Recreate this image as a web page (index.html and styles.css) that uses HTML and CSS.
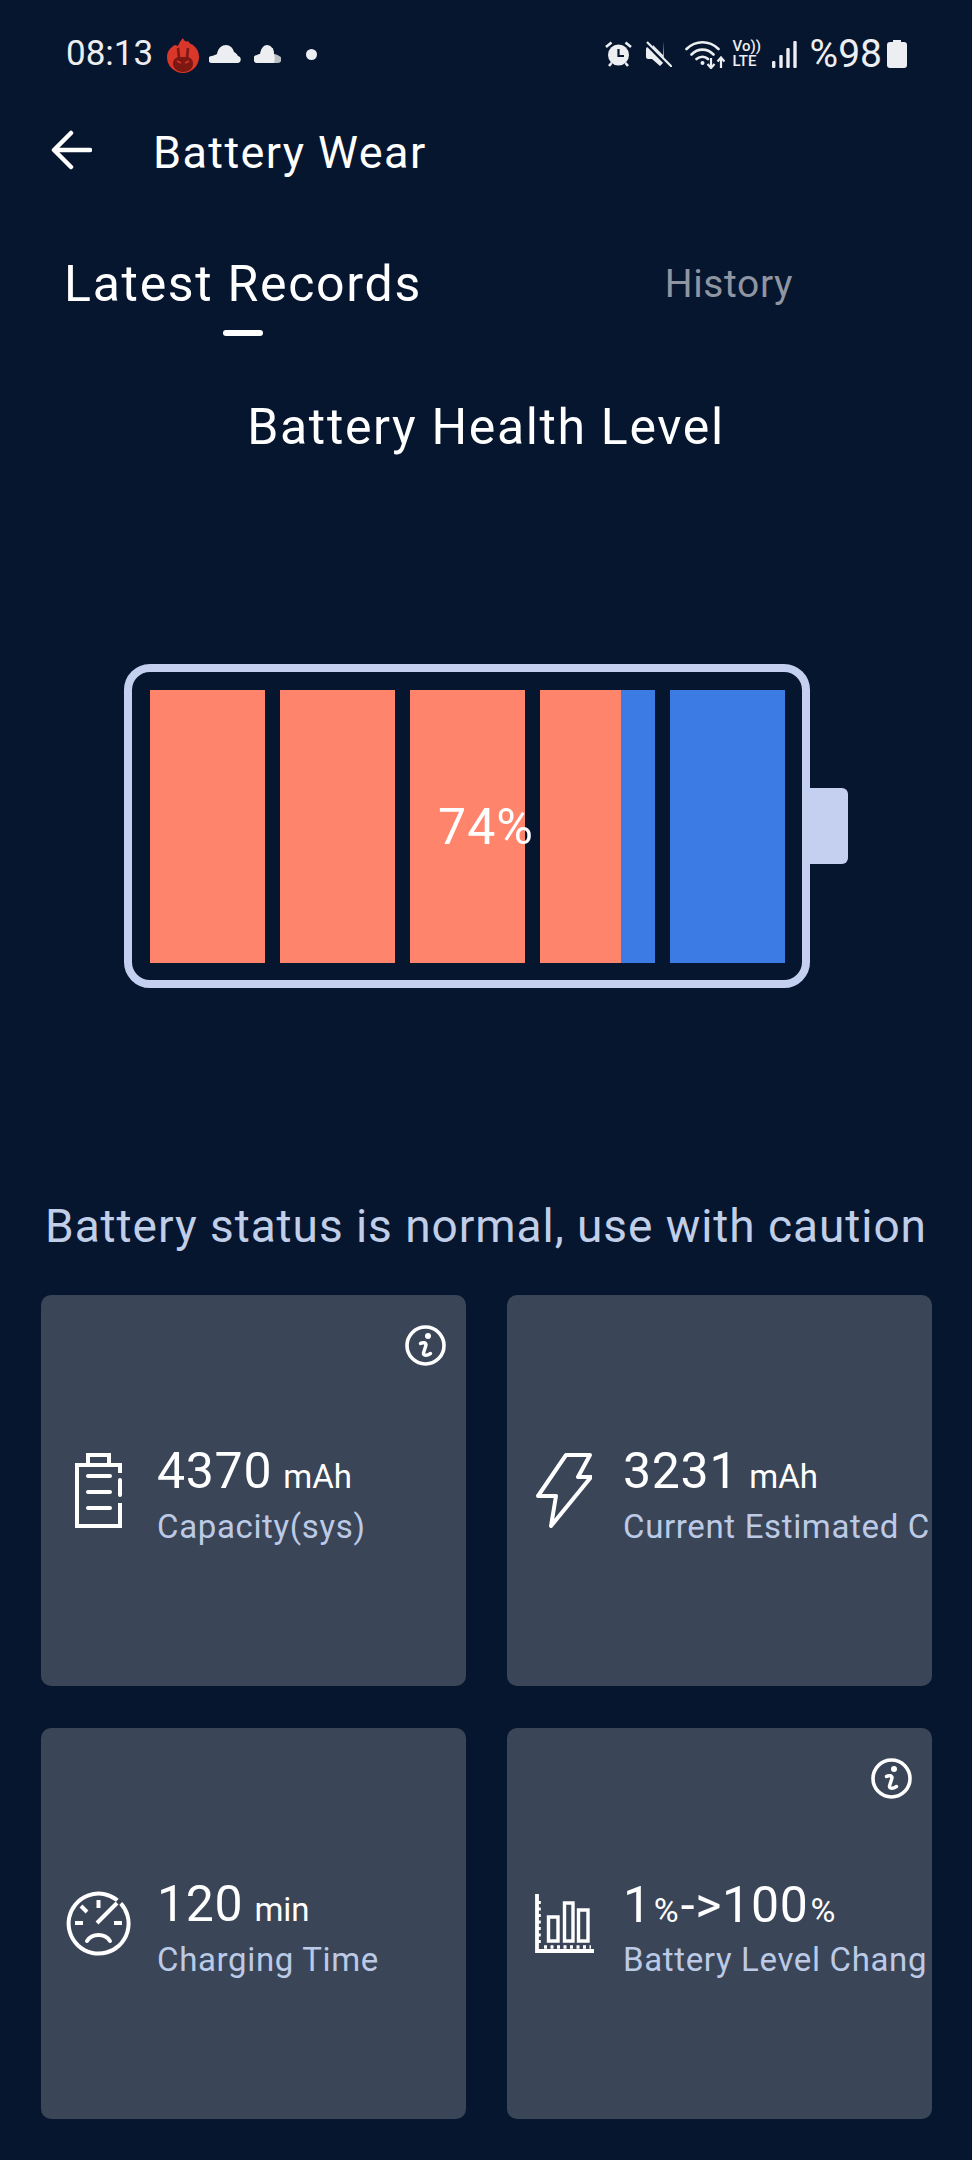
FILE: index.html
```html
<!DOCTYPE html>
<html lang="en">

<head>
    <meta charset="UTF-8">
    <meta name="viewport" content="width=device-width, initial-scale=1.0">
    <title>Battery Wear</title>
    <link rel="stylesheet" href="styles.css">
</head>

<body>
    <div class="status-bar">
        <span class="clock">08:13</span>
        <svg class="ic-flame" width="32" height="35" viewBox="0 0 32 35">
            <path fill="#d8372a" d="M16 0C17 3 19 4 21 3C22 5 24 6 26 7C30 10 32 14 32 19A16 16 0 0 1 0 19C0 13 4 9 8 7C9 7 10 8 11 8C12 5 14 2 16 0Z" />
            <path fill="#7c1712" d="M16 34C10 34 6 30 6 26C6 22 8 20 11 19H21C24 20 26 22 26 26C26 30 22 34 16 34Z" />
            <path stroke="#7c1712" stroke-width="2.6" fill="none" d="M11 10L12 20M21 10L20 20" />
            <path stroke="#d8372a" stroke-width="1.6" fill="none" d="M10 23L14 25M22 23L18 25" />
        </svg>
        <svg class="ic-cloud-a" width="32" height="18" viewBox="0 0 32 18">
            <path fill="#eceef1" d="M3 18A3 3 0 0 1 3 11C5 10 7 10 8 9C9 3 13 0 17 0C21 0 24 3 25 7C27 8 28 9 29 11A3.6 3.6 0 0 1 29 18Z" />
        </svg>
        <svg class="ic-cloud-b" width="27" height="18" viewBox="0 0 27 18">
            <path fill="#b9bdc4" d="M14 3H19L20 9C22 9 24 10 25 11A3.6 3.6 0 0 1 24 18H14Z" />
            <path fill="#eceef1" d="M4 18A4 4 0 0 1 3 10C4 9 5 9 6 9C7 3 10 0 13 0C17 0 20 4 20 9C21 12 21 15 20 18Z" />
        </svg>
        <span class="status-dot"></span>

        <div class="status-right">
            <svg class="ic-alarm" width="27" height="26" viewBox="0 0 27 26">
                <circle cx="13.5" cy="14" r="10.5" fill="#eceef1" />
                <path stroke="#eceef1" stroke-width="2.6" fill="none" d="M1 6L6.5 1.5M26 6L20.5 1.5M4 25L6.5 22M23 25L20.5 22" />
                <path stroke="#07162f" stroke-width="2.2" fill="none" d="M13.5 8V15H19" />
            </svg>
            <svg class="ic-mute" width="27" height="26" viewBox="0 0 27 26">
                <path fill="#eceef1" d="M18 0V14L8 4L8 6H3A2 2 0 0 0 1 8V16A2 2 0 0 0 3 18H7L15 25L17 23L19 21Z" />
                <path stroke="#07162f" stroke-width="4" fill="none" d="M0 1L25 26" />
                <path stroke="#eceef1" stroke-width="2.2" fill="none" d="M2 1L27 26" />
            </svg>
            <svg class="ic-wifi" width="40" height="30" viewBox="0 0 40 30">
                <path stroke="#eceef1" stroke-width="2.6" fill="none" stroke-linecap="round" d="M1.5 10C11 1 24 1 33.500 10M6.500 15.500C13 9 22 9 28.500 15.500M11.500 20C15 17 20 17 23 20" />
                <circle cx="17.500" cy="24" r="2" fill="#eceef1" />
                <path stroke="#eceef1" stroke-width="2.200" fill="none" d="M26 19V28M22.500 25L26 29L29.500 25M36 29V19M32.500 22.500L36 18.500L39.500 22.500" />
            </svg>
            <div class="volte">
                <span>Vo))</span>
                <span>LTE</span>
            </div>
            <svg class="ic-signal" width="25" height="27" viewBox="0 0 25 27">
                <rect x="0" y="20" width="3.400" height="7" rx="1" fill="#eceef1" />
                <rect x="7.300" y="14" width="3.400" height="13" rx="1" fill="#eceef1" />
                <rect x="14.300" y="7" width="3.400" height="20" rx="1" fill="#eceef1" />
                <rect x="21.300" y="0" width="3.400" height="27" rx="1" fill="#eceef1" />
            </svg>
            <span class="level">%98</span>
            <svg class="ic-batt" width="20" height="28" viewBox="0 0 20 28">
                <path fill="#eceef1" d="M6 0H14V2H17A3 3 0 0 1 20 5V25A3 3 0 0 1 17 28H3A3 3 0 0 1 0 25V5A3 3 0 0 1 3 2H6Z" />
            </svg>
        </div>
    </div>

    <header class="app-bar">
        <svg class="back" width="41" height="40" viewBox="0 0 41 40">
            <path stroke="#fff" stroke-width="4.500" fill="none" stroke-linecap="round" stroke-linejoin="round" d="M39 20H4M20 3L3 20L20 37" />
        </svg>
        <h1>Battery Wear</h1>
    </header>

    <nav class="tabs">
        <div class="tab active">
            <span>Latest Records</span>
            <i class="indicator"></i>
        </div>
        <div class="tab">
            <span>History</span>
        </div>
    </nav>

    <h2 class="health-title">Battery Health Level</h2>

    <div class="battery-row">
        <div class="battery">
            <div class="cell"><div class="cell-fill" style="width: 100%"></div></div>
            <div class="cell"><div class="cell-fill" style="width: 100%"></div></div>
            <div class="cell"><div class="cell-fill" style="width: 100%"></div></div>
            <div class="cell"><div class="cell-fill" style="width: 70%"></div></div>
            <div class="cell"></div>
        </div>
        <div class="battery-nub"></div>
        <span class="percent">74%</span>
    </div>

    <p class="status-text">Battery status is normal, use with caution</p>

    <div class="cards">
        <div class="card">
            <svg class="info" width="41" height="41" viewBox="0 0 41 41">
                <circle cx="20.500" cy="20.500" r="18.500" stroke="#fff" stroke-width="3.600" fill="none" />
                <circle cx="23" cy="11" r="3" fill="#fff" />
                <path stroke="#fff" stroke-width="3.400" fill="none" stroke-linecap="round" d="M15.500 18.500C17 17.500 21.500 17 21 20L18.500 28C18 31 22 31 25.500 28.500" />
            </svg>
            <div class="card-icon">
                <svg width="47" height="75" viewBox="0 0 47 75">
                    <path stroke="#fff" stroke-width="4" fill="none" d="M45 20V12H2V73H45V50M13 12V2H34V12" />
                    <path stroke="#fff" stroke-width="4" fill="none" stroke-linecap="round" d="M45 27V42M13 23H35M13 39H35M13 55H35" />
                </svg>
            </div>
            <div class="card-text">
                <div class="value">4370<small>mAh</small></div>
                <div class="label">Capacity(sys)</div>
            </div>
        </div>

        <div class="card">
            <div class="card-icon">
                <svg width="56" height="75" viewBox="0 0 56 75">
                    <path stroke="#fff" stroke-width="4" fill="none" stroke-linejoin="round" d="M30 2H54L42 24H55L15 73L20 43H2Z" />
                </svg>
            </div>
            <div class="card-text">
                <div class="value">3231<small>mAh</small></div>
                <div class="label">Current Estimated Capacity</div>
            </div>
        </div>

        <div class="card">
            <div class="card-icon">
                <svg width="65" height="65" viewBox="0 0 65 65">
                    <path stroke="#fff" stroke-width="4" fill="none" d="M54.800 12.400A30 30 0 1 1 51.400 9.200" />
                    <path stroke="#fff" stroke-width="4" fill="none" d="M32.500 9V17M15 15L21 21M9 32H17M48 32H56M31 32L51 12" />
                    <path stroke="#fff" stroke-width="4" fill="none" stroke-linecap="round" d="M21 50C26 42 39 42 44 50" />
                </svg>
            </div>
            <div class="card-text">
                <div class="value">120<small>min</small></div>
                <div class="label">Charging Time</div>
            </div>
        </div>

        <div class="card">
            <svg class="info" width="41" height="41" viewBox="0 0 41 41">
                <circle cx="20.500" cy="20.500" r="18.500" stroke="#fff" stroke-width="3.600" fill="none" />
                <circle cx="23" cy="11" r="3" fill="#fff" />
                <path stroke="#fff" stroke-width="3.400" fill="none" stroke-linecap="round" d="M15.500 18.500C17 17.500 21.500 17 21 20L18.500 28C18 31 22 31 25.500 28.500" />
            </svg>
            <div class="card-icon">
                <svg width="59" height="59" viewBox="0 0 59 59">
                    <path stroke="#fff" stroke-width="3.800" fill="none" d="M2 0V57H59" />
                    <path stroke="#fff" stroke-width="3.600" fill="none" stroke-dasharray="3 3.500" d="M4 7V50M9 53H56" />
                    <path stroke="#fff" stroke-width="3.400" fill="none" d="M13.500 47V23H23V47ZM29.500 47V9H38V47ZM43.500 47V16H53V47Z" />
                </svg>
            </div>
            <div class="card-text">
                <div class="value">1<small class="tight">%</small>-&gt;100<small class="tight">%</small></div>
                <div class="label">Battery Level Change</div>
            </div>
        </div>
    </div>
</body>

</html>
```

FILE: styles.css
```css
body {
    font-family: 'Roboto', sans-serif;
    background-color: #07162f;
    margin: 0;
    padding: 0;
    min-height: 100vh;
    color: #fff;
}

/* status bar */
.status-bar {
    display: flex;
    align-items: center;
    height: 108px;
    padding: 0 65px 0 66px;
    color: #eceef1;
}

.clock {
    font-size: 35px;
    line-height: 40px;
}

.ic-flame {
    margin-left: 14px;
    margin-top: 2px;
}

.ic-cloud-a {
    margin-left: 10px;
}

.ic-cloud-b {
    margin-left: 13px;
}

.status-dot {
    width: 11px;
    height: 11px;
    margin-left: 25px;
    border-radius: 50%;
    background-color: #eceef1;
}

.status-right {
    display: flex;
    align-items: center;
    margin-left: auto;
}

.ic-mute {
    margin-left: 13px;
}

.ic-wifi {
    margin-left: 13px;
}

.volte {
    display: flex;
    flex-direction: column;
    width: 28px;
    margin-left: 8px;
    font-size: 15px;
    font-weight: 500;
    line-height: 15px;
}

.ic-signal {
    margin-left: 11px;
}

.level {
    margin-left: 13px;
    font-size: 39px;
    line-height: 40px;
}

.ic-batt {
    margin-left: 5px;
}

/* app bar */
.app-bar {
    display: flex;
    align-items: center;
    height: 88px;
    padding-left: 51px;
}

.back {
    margin-bottom: 4px;
}

.app-bar h1 {
    margin: 0 0 0 61px;
    font-size: 45px;
    font-weight: 400;
    letter-spacing: 1.4px;
}

/* tabs */
.tabs {
    display: grid;
    grid-template-columns: 1fr 1fr;
    padding-top: 60px;
}

.tab {
    display: flex;
    flex-direction: column;
    align-items: center;
    font-size: 39px;
    line-height: 56px;
    letter-spacing: 0.6px;
    color: #8f95a1;
}

.tab.active {
    font-size: 50px;
    letter-spacing: 1.7px;
    color: #fff;
}

.indicator {
    width: 40px;
    height: 6px;
    margin-top: 18px;
    border-radius: 3px;
    background-color: #fff;
}

.health-title {
    margin: 61px 0 0 0;
    font-size: 50px;
    font-weight: 400;
    line-height: 60px;
    text-align: center;
    letter-spacing: 1.65px;
}

/* battery */
.battery-row {
    position: relative;
    display: flex;
    align-items: center;
    margin-top: 207px;
    padding-left: 124px;
}

.battery {
    display: flex;
    gap: 15px;
    box-sizing: border-box;
    width: 686px;
    height: 324px;
    padding: 18px 17px 17px 18px;
    border: 8px solid #c5d0f0;
    border-radius: 26px;
}

.cell {
    width: 115px;
    background-color: #3d7be4;
}

.cell-fill {
    height: 100%;
    background-color: #ff846c;
}

.percent {
    position: absolute;
    top: 50%;
    left: 50%;
    transform: translate(-50%, -48%);
    font-size: 50px;
    line-height: 60px;
    letter-spacing: 1px;
}

.battery-nub {
    width: 38px;
    height: 76px;
    border-radius: 0 6px 6px 0;
    background-color: #c5d0f0;
}

.status-text {
    margin: 212px 0 0 0;
    font-size: 46px;
    line-height: 52px;
    text-align: center;
    letter-spacing: 0.95px;
    color: #c1cee8;
}

/* cards */
.cards {
    display: grid;
    grid-template-columns: 425px 425px;
    grid-auto-rows: 391px;
    gap: 42px 41px;
    margin-top: 43px;
    padding-left: 41px;
}

.card {
    position: relative;
    display: flex;
    align-items: center;
    overflow: hidden;
    border-radius: 10px;
    background-color: #3a4558;
}

.info {
    position: absolute;
    top: 30px;
    right: 20px;
}

.card-icon {
    display: flex;
    flex: none;
    justify-content: center;
    width: 66px;
    margin-left: 24px;
}

.card-text {
    max-width: 305px;
    margin-left: 26px;
    padding-top: 7px;
    overflow: hidden;
    white-space: nowrap;
}

.value {
    font-size: 50px;
    line-height: 60px;
    letter-spacing: 0.7px;
}

.value small {
    margin-left: 11px;
    font-size: 33px;
    letter-spacing: 0;
}

.value small.tight {
    margin: 0 2px;
    font-size: 34px;
}

.label {
    font-size: 33px;
    line-height: 40px;
    letter-spacing: 0.65px;
    color: #bccae6;
}
```
